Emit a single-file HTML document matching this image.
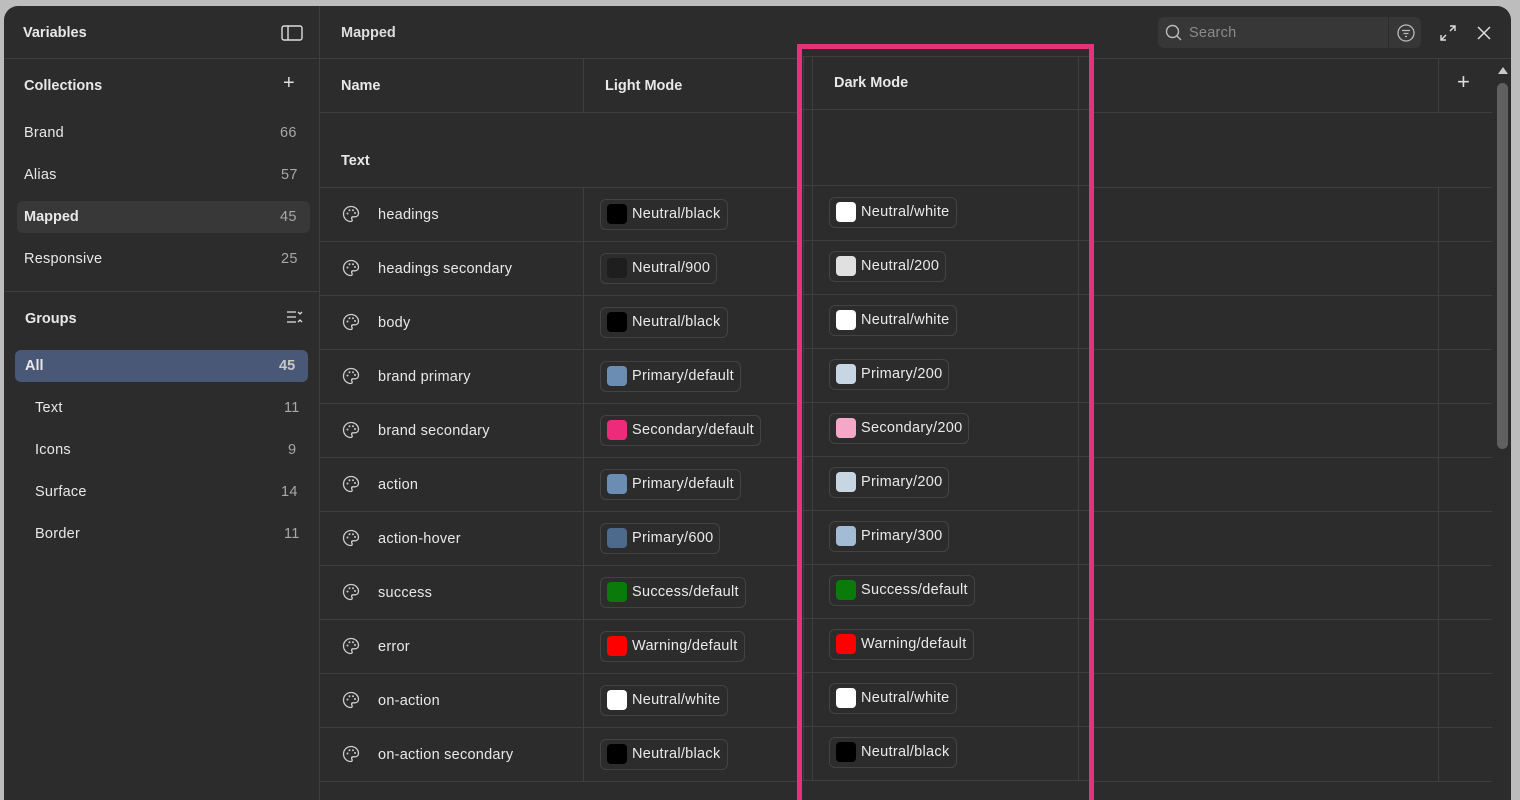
<!DOCTYPE html>
<html><head><meta charset="utf-8"><style>
*{margin:0;padding:0;box-sizing:border-box}
html,body{width:1520px;height:800px;overflow:hidden}
body{background:#bdbdbd;font-family:"Liberation Sans",sans-serif;position:relative;color:#e8e8e8}
.win{position:absolute;left:4px;top:6px;width:1507px;height:794px;background:#2c2c2c;border-radius:14px 14px 0 0;overflow:hidden}
.a{position:absolute}
.hl{position:absolute;height:1px;background:#3e3e3e}
.vl{position:absolute;width:1px;background:#3e3e3e}
.t{position:absolute;font-size:14.5px;line-height:16px;white-space:nowrap;letter-spacing:0.25px}
.b{font-weight:bold;letter-spacing:0}
.n{color:#a8a8a8}
.pill{position:absolute;height:31px;border:1px solid #434343;border-radius:6px;padding:4px 6px 0 6px;font-size:14.5px;letter-spacing:0.3px;line-height:21px;color:#eaeaea;white-space:nowrap;display:flex;gap:5px}
.sw{width:20px;height:20px;border-radius:4px;display:inline-block}
</style></head><body>
<div class="win">
<div class="t b" style="left:19px;top:19px">Variables</div>
<svg class="a" style="left:277px;top:19px" width="22" height="16" viewBox="0 0 22 16"><rect x="1" y="1" width="20" height="14" rx="2" fill="none" stroke="#ddd" stroke-width="1.4"/><line x1="7" y1="1" x2="7" y2="15" stroke="#ddd" stroke-width="1.4"/></svg>
<div class="hl" style="left:0;top:52px;width:1507px"></div>
<div class="vl" style="left:315px;top:0;height:820px"></div>
<div class="t b" style="left:20px;top:72px">Collections</div>
<div class="t" style="left:279px;top:69px;font-size:20px;color:#ddd">+</div>
<div class="t" style="left:20px;top:119px">Brand</div><div class="t n" style="left:276px;top:119px">66</div>
<div class="t" style="left:20px;top:161px">Alias</div><div class="t n" style="left:277px;top:161px">57</div>
<div class="a" style="left:13px;top:195px;width:293px;height:32px;background:#383838;border-radius:6px"></div>
<div class="t b" style="left:20px;top:203px">Mapped</div><div class="t n" style="left:276px;top:203px">45</div>
<div class="t" style="left:20px;top:245px">Responsive</div><div class="t n" style="left:277px;top:245px">25</div>
<div class="hl" style="left:0;top:285px;width:315px"></div>
<div class="t b" style="left:21px;top:305px">Groups</div>
<svg class="a" style="left:282px;top:304px" width="18" height="14" viewBox="0 0 18 14"><g stroke="#ddd" stroke-width="1.3"><line x1="1" y1="2" x2="10" y2="2"/><line x1="1" y1="7" x2="10" y2="7"/><line x1="1" y1="12" x2="10" y2="12"/><polyline points="12,2 14,4 16,2" fill="none"/><polyline points="12,12 14,10 16,12" fill="none"/></g></svg>
<div class="a" style="left:11px;top:344px;width:293px;height:32px;background:#4a5877;border-radius:6px"></div>
<div class="t b" style="left:21px;top:352px">All</div><div class="t b" style="left:275px;top:352px;color:#c8c8c8">45</div>
<div class="t" style="left:31px;top:394px">Text</div><div class="t n" style="left:280px;top:394px">11</div>
<div class="t" style="left:31px;top:436px">Icons</div><div class="t n" style="left:284px;top:436px">9</div>
<div class="t" style="left:31px;top:478px">Surface</div><div class="t n" style="left:277px;top:478px">14</div>
<div class="t" style="left:31px;top:520px">Border</div><div class="t n" style="left:280px;top:520px">11</div>
<div class="t b" style="left:337px;top:19px;color:#ddd">Mapped</div>
<div class="a" style="left:1154px;top:11px;width:263px;height:31px;background:#373737;border-radius:6px"></div>
<div class="vl" style="left:1384px;top:11px;height:31px;background:#2c2c2c"></div>
<svg class="a" style="left:1161px;top:18px" width="18" height="18" viewBox="0 0 18 18"><circle cx="7.5" cy="7.5" r="6" fill="none" stroke="#bbb" stroke-width="1.4"/><line x1="12" y1="12" x2="16" y2="16" stroke="#bbb" stroke-width="1.4"/></svg>
<div class="t" style="left:1185px;top:19px;color:#8a8a8a">Search</div>
<svg class="a" style="left:1392px;top:17px" width="20" height="20" viewBox="0 0 20 20"><circle cx="10" cy="10" r="8" fill="none" stroke="#bbb" stroke-width="1.3"/><g stroke="#bbb" stroke-width="1.3"><line x1="6" y1="7.5" x2="14" y2="7.5"/><line x1="7.5" y1="10.5" x2="12.5" y2="10.5"/><line x1="9" y1="13.5" x2="11" y2="13.5"/></g></svg>
<svg class="a" style="left:1435px;top:18px" width="18" height="18" viewBox="0 0 18 18"><g stroke="#ddd" stroke-width="1.4" fill="none"><polyline points="11,2 16,2 16,7"/><line x1="16" y1="2" x2="11" y2="7"/><polyline points="2,11 2,16 7,16"/><line x1="2" y1="16" x2="7" y2="11"/></g></svg>
<svg class="a" style="left:1472px;top:19px" width="16" height="16" viewBox="0 0 16 16"><g stroke="#ddd" stroke-width="1.5"><line x1="2" y1="2" x2="14" y2="14"/><line x1="14" y1="2" x2="2" y2="14"/></g></svg>
<div class="hl" style="left:316px;top:106px;width:1172px"></div>
<div class="hl" style="left:316px;top:181px;width:1172px"></div>
<div class="vl" style="left:579px;top:53px;height:53px"></div>
<div class="vl" style="left:1434px;top:53px;height:53px"></div>
<div class="t b" style="left:337px;top:72px">Name</div>
<div class="t b" style="left:601px;top:72px">Light Mode</div>
<div class="t" style="left:1453px;top:68px;font-size:22px;color:#ddd">+</div>
<div class="t b" style="left:337px;top:147px">Text</div>
<div id="rows"></div>
<div class="a" style="left:1492px;top:53px;width:15px;height:770px;background:#2c2c2c"></div>
<svg class="a" style="left:1493px;top:60px" width="12" height="10" viewBox="0 0 12 10"><polygon points="6,1 11,8 1,8" fill="#c8c8c8"/></svg>
<div class="a" style="left:1493px;top:77px;width:11px;height:366px;background:#606060;border-radius:6px"></div>
<div class="a" style="left:793px;top:38px;width:297px;height:800px;border:5px solid #e8317a;border-bottom:none"></div>
</div>
<script>
var rows=[["headings","#000","Neutral/black","#fff","Neutral/white"],
["headings secondary","#1e1e1e","Neutral/900","#e0e0e0","Neutral/200"],
["body","#000","Neutral/black","#fff","Neutral/white"],
["brand primary","#6b8db3","Primary/default","#c8d6e4","Primary/200"],
["brand secondary","#ee2a7b","Secondary/default","#f5a7c7","Secondary/200"],
["action","#6b8db3","Primary/default","#c8d6e4","Primary/200"],
["action-hover","#4d6a8d","Primary/600","#a3bcd6","Primary/300"],
["success","#0a7a0a","Success/default","#0a7a0a","Success/default"],
["error","#ff0000","Warning/default","#ff0000","Warning/default"],
["on-action","#fff","Neutral/white","#fff","Neutral/white"],
["on-action secondary","#000","Neutral/black","#000","Neutral/black"]];
var h='';
var pal='<svg class="a" style="left:338px;top:TOPpx" width="18" height="18" viewBox="0 0 18 18"><path d="M9 1.5C4.8 1.5 1.5 4.8 1.5 9s3.3 7.5 7.3 7.5c1 0 1.4-.7 1.4-1.4 0-.8-.6-1.1-.6-1.9 0-.8.6-1.4 1.4-1.4h2c2 0 3.5-1.5 3.5-3.4C16.5 4.5 13.2 1.5 9 1.5z" fill="none" stroke="#ccc" stroke-width="1.3"/><circle cx="5.5" cy="8.5" r="1" fill="#ccc"/><circle cx="7.5" cy="5.2" r="1" fill="#ccc"/><circle cx="11" cy="5.2" r="1" fill="#ccc"/><circle cx="13" cy="8" r="1" fill="#ccc"/></svg>';
rows.forEach(function(r,i){var y=181+54*i;
h+='<div class="hl" style="left:316px;top:'+(y+54)+'px;width:1172px"></div>';
h+='<div class="vl" style="left:579px;top:'+y+'px;height:54px"></div><div class="vl" style="left:1434px;top:'+y+'px;height:54px"></div>';
h+=pal.replace('TOP',y+18);
h+='<div class="t" style="left:374px;top:'+(y+20)+'px">'+r[0]+'</div>';
h+='<div class="pill" style="left:596px;top:'+(y+12)+'px"><span class="sw" style="background:'+r[1]+'"></span>'+r[2]+'</div>';
});
h+='<div class="a" style="left:798px;top:43px;width:287px;height:760px;background:#2c2c2c"></div>';
h+='<div class="hl" style="left:798px;top:50px;width:287px"></div><div class="hl" style="left:798px;top:103px;width:287px"></div><div class="hl" style="left:798px;top:179px;width:287px"></div>';
h+='<div class="vl" style="left:799px;top:50px;height:724px"></div><div class="vl" style="left:808px;top:50px;height:724px"></div><div class="vl" style="left:1074px;top:50px;height:724px"></div>';
h+='<div class="t b" style="left:830px;top:69px">Dark Mode</div>';
rows.forEach(function(r,i){var y=179+54*i;
h+='<div class="hl" style="left:798px;top:'+(y+55)+'px;width:287px"></div>';
h+='<div class="pill" style="left:825px;top:'+(y+12)+'px"><span class="sw" style="background:'+r[3]+'"></span>'+r[4]+'</div>';
});
document.getElementById('rows').innerHTML=h;
</script>
</body></html>
